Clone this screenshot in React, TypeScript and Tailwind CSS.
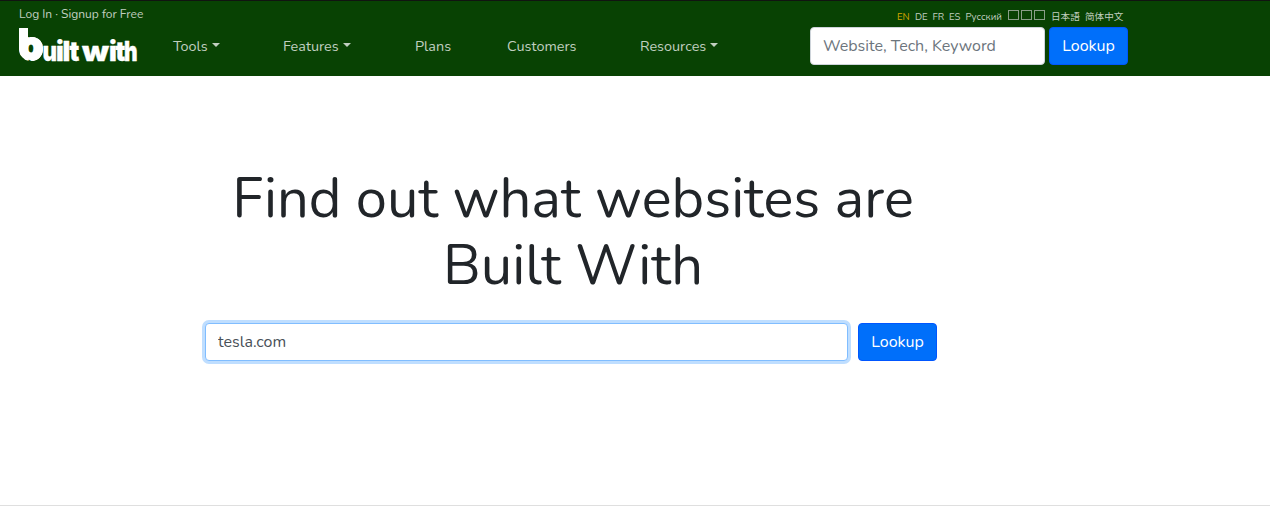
import type { ReactNode } from "react";

function Caret() {
  return (
    <svg width="8" height="4" viewBox="0 0 8 4" className="mb-[3px] ml-[3.9px] fill-current">
      <path d="M0 0H8L4 4Z" />
    </svg>
  );
}

function NavItem({ children, caret = false, className }: { children: ReactNode; caret?: boolean; className: string }) {
  return (
    <a className={`flex shrink-0 items-center whitespace-nowrap text-[14.4px] leading-[22px] ${className}`}>
      <span>{children}</span>
      {caret && <Caret />}
    </a>
  );
}

const wordmark = [
  { letter: "u", x: 24.5, width: 14.5 },
  { letter: "i", x: 38, width: 7.8 },
  { letter: "l", x: 44.6, width: 7.8 },
  { letter: "t", x: 51.4, width: 9.8 },
  { letter: "w", x: 64, width: 27 },
  { letter: "i", x: 91, width: 7.8 },
  { letter: "t", x: 97.6, width: 9.8 },
  { letter: "h", x: 106, width: 13.6 },
];

function Logo() {
  return (
    <svg width="120" height="36" viewBox="0 0 120 36" className="block" aria-label="BuiltWith">
      <defs>
        <clipPath id="bowl">
          <path d="M1 1H10V10H14A11 11 0 0 1 25 22A11.5 11.5 0 0 1 13 34A12 12 0 0 1 1 22Z" />
        </clipPath>
      </defs>
      <g fill="#fff" stroke="#fff" strokeLinejoin="round" fontFamily="Inter, sans-serif" fontWeight="900">
        <text x="-0.5" y="33.3" fontSize="42" strokeWidth="2.2" textLength="26.5" lengthAdjust="spacingAndGlyphs" clipPath="url(#bowl)">
          b
        </text>
        {wordmark.map(({ letter, x, width }) => (
          <text key={x} x={x} y="33.8" fontSize="27.5" strokeWidth="0.3" textLength={width} lengthAdjust="spacingAndGlyphs">
            {letter}
          </text>
        ))}
      </g>
    </svg>
  );
}

function LookupButton() {
  return (
    <button className="h-[38px] w-[79px] shrink-0 rounded border border-[#0056ff] bg-[#006ffa] text-center text-[16px] leading-6 text-white">
      Lookup
    </button>
  );
}

export default function App() {
  return (
    <div className="flex h-[506px] w-[1270px] flex-col overflow-hidden border-b border-[#dfdfdf] bg-white font-[Nunito,'Noto_Sans','Noto_Sans_CJK_JP',sans-serif] text-[#212529]">
      <header className="flex h-[76px] shrink-0 border-t border-[#111411] bg-[#084203] text-[#c1cfc0]">
        <div className="ml-[18px] w-[155px] pt-[5px]">
          <div className="h-[17px] whitespace-nowrap pl-px text-[12px] leading-4">
            <a>Log In</a> · <a>Signup for Free</a>
          </div>
          <div className="mt-1">
            <Logo />
          </div>
        </div>
        <nav className="flex w-[637px] items-start pt-[34px]">
          <NavItem caret className="w-[110px]">Tools</NavItem>
          <NavItem caret className="w-[132px]">Features</NavItem>
          <NavItem className="w-[92px]">Plans</NavItem>
          <NavItem className="w-[133px]">Customers</NavItem>
          <NavItem caret className="w-[100px]">Resources</NavItem>
        </nav>
        <div className="w-[318px] pt-[7px]">
          <div className="mb-px flex h-[18px] items-center whitespace-nowrap pl-[87px] text-[9.6px] leading-[14px]">
            <a className="w-[18px] text-[#d8a800]">EN</a>
            <a className="w-[17.5px]">DE</a>
            <a className="w-[16.5px]">FR</a>
            <a className="w-[16.5px]">ES</a>
            <a className="w-[42.5px]">Русский</a>
            <a className="mb-1 flex w-[43px] gap-[2px]">
              <span className="h-[10px] w-[11px] border border-[#8a9e88]" />
              <span className="h-[10px] w-[11px] border border-[#8a9e88]" />
              <span className="h-[10px] w-[11px] border border-[#8a9e88]" />
            </a>
            <a className="w-[34px]">日本語</a>
            <a>简体中文</a>
          </div>
          <div className="flex gap-1">
            <input
              className="h-[38px] w-[235px] rounded border border-[#ced4da] bg-white px-3 text-[16px] leading-6 text-[#495057] outline-none placeholder:text-[#6c757d]"
              placeholder="Website, Tech, Keyword"
            />
            <LookupButton />
          </div>
        </div>
      </header>
      <main className="ml-[205px] w-[736px] pt-[89px]">
        <h1 className="text-center text-[56px] font-normal leading-[67px]">
          Find out what websites are
          <br />
          Built With
        </h1>
        <div className="mt-[24px] flex gap-[10px]">
          <input
            className="h-[38px] w-[643px] rounded border border-[#80bdff] bg-white px-3 text-[16px] leading-6 text-[#495057] shadow-[0_0_0_3px_#bfdeff] outline-none"
            defaultValue="tesla.com"
          />
          <LookupButton />
        </div>
      </main>
    </div>
  );
}
